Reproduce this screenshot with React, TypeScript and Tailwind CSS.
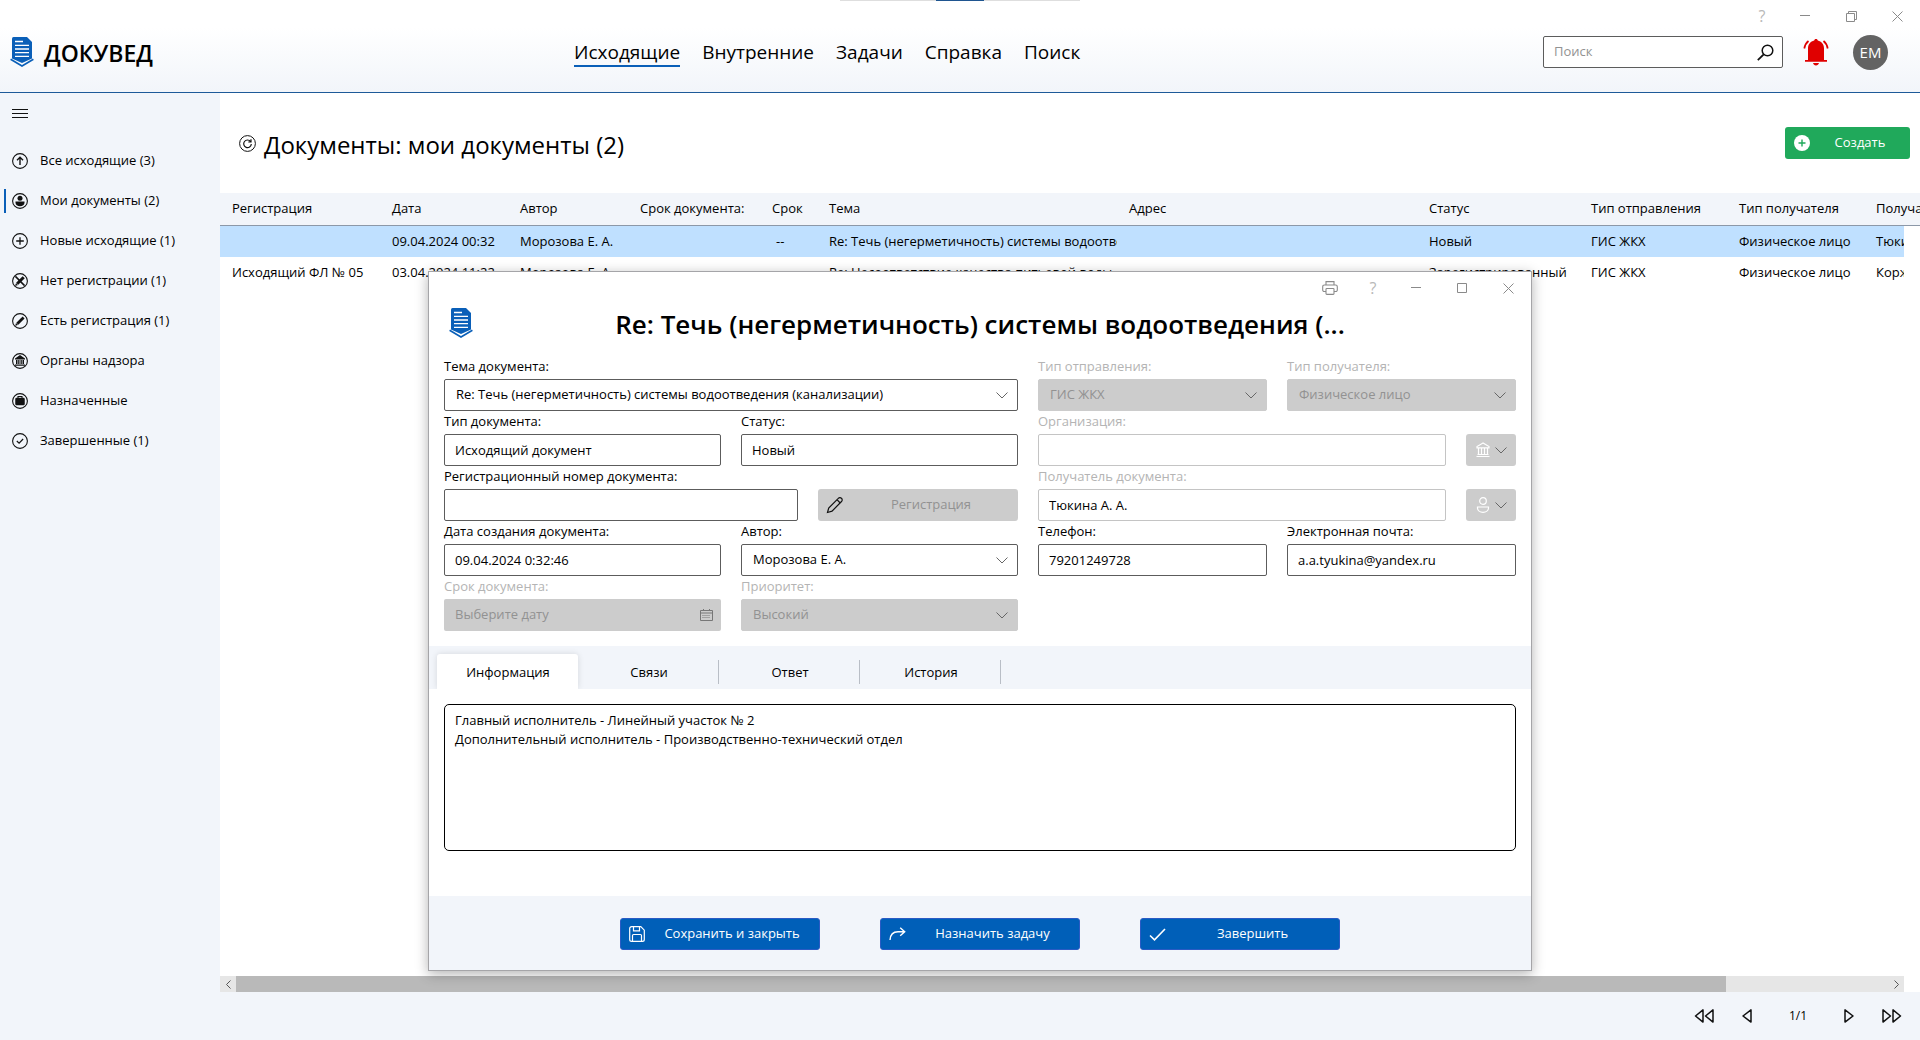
import React, { useState } from 'react';
import clsx from 'clsx';

interface Doc {
  reg: string;
  date: string;
  author: string;
  due: string;
  left: string;
  subject: string;
  address: string;
  status: string;
  sendType: string;
  recipientType: string;
  recipient: string;
}

const docs: Doc[] = [
  {
    reg: '',
    date: '09.04.2024 00:32',
    author: 'Морозова Е. А.',
    due: '',
    left: '--',
    subject: 'Re: Течь (негерметичность) системы водоотведения (канализации)',
    address: '',
    status: 'Новый',
    sendType: 'ГИС ЖКХ',
    recipientType: 'Физическое лицо',
    recipient: 'Тюкина А. А.',
  },
  {
    reg: 'Исходящий ФЛ № 05',
    date: '03.04.2024 11:22',
    author: 'Морозова Е. А.',
    due: '',
    left: '',
    subject: 'Re: Несоответствие качества питьевой воды',
    address: '',
    status: 'Зарегистрированный',
    sendType: 'ГИС ЖКХ',
    recipientType: 'Физическое лицо',
    recipient: 'Коржов И. В.',
  },
];

const columns = [
  { key: 'reg', title: 'Регистрация', width: 'w-[160px]' },
  { key: 'date', title: 'Дата', width: 'w-[128px]' },
  { key: 'author', title: 'Автор', width: 'w-[120px]' },
  { key: 'due', title: 'Срок документа:', width: 'w-[132px]' },
  { key: 'left', title: 'Срок', width: 'w-[57px]' },
  { key: 'subject', title: 'Тема', width: 'w-[300px]' },
  { key: 'address', title: 'Адрес', width: 'w-[300px]' },
  { key: 'status', title: 'Статус', width: 'w-[162px]' },
  { key: 'sendType', title: 'Тип отправления', width: 'w-[148px]' },
  { key: 'recipientType', title: 'Тип получателя', width: 'w-[137px]' },
  { key: 'recipient', title: 'Получатель', width: '' },
] as const;

const navItems = ['Исходящие', 'Внутренние', 'Задачи', 'Справка', 'Поиск'];
const tabs = ['Информация', 'Связи', 'Ответ', 'История'];

function Logo() {
  return (
    <svg width="24" height="30" viewBox="0 0 24 30" aria-hidden="true">
      <path d="M3.500 0H17l5 5v16.500L12 26 2 21.500V1.500A1.500 1.500 0 0 1 3.500 0z" fill="#0a5fb8" />
      <path d="M.6 22.300 12 29l11.400-6.700" fill="none" stroke="#0a5fb8" strokeWidth="1.600" />
      <path d="M5 4.500h8M5 8.300h14M5 12h14M5 15.700h14M5 19.400h14" stroke="#fff" strokeWidth="1.300" />
    </svg>
  );
}

function Ring({ children }: { children: React.ReactNode }) {
  return (
    <svg width="16" height="16" viewBox="0 0 16 16" fill="none" stroke="#111" className="shrink-0" aria-hidden="true">
      <circle cx="8" cy="8" r="7.400" strokeWidth="1.100" />
      {children}
    </svg>
  );
}

const menu = [
  { label: 'Все исходящие (3)', icon: <path d="M8 12V4.500M5 7.300l3-3 3 3" strokeWidth="1.400" /> },
  {
    label: 'Мои документы (2)',
    icon: (
      <g fill="#111" stroke="none">
        <circle cx="8" cy="5.200" r="2.500" />
        <path d="M3.500 8.600h9v1.200c0 2-2 3.400-4.500 3.400s-4.500-1.400-4.500-3.400z" />
      </g>
    ),
  },
  { label: 'Новые исходящие (1)', icon: <path d="M8 4.200v7.600M4.200 8h7.600" strokeWidth="1.300" /> },
  {
    label: 'Нет регистрации (1)',
    icon: (
      <>
        <path d="M11.700 4.300 5.200 10.800" strokeWidth="3" />
        <path d="m3.500 12.500 2-.6-1.400-1.400z" fill="#111" strokeWidth=".5" />
        <path d="m3.400 3.400 9.200 9.200" strokeWidth="1.500" />
      </>
    ),
  },
  {
    label: 'Есть регистрация (1)',
    icon: (
      <>
        <path d="M11.600 4.400 5.300 10.700" strokeWidth="2.800" />
        <path d="m3.600 12.400 2-.6-1.400-1.400z" fill="#111" strokeWidth=".5" />
      </>
    ),
  },
  {
    label: 'Органы надзора',
    icon: (
      <g fill="#111" stroke="none">
        <path d="M8 2 3 5.500v1h10v-1zM3 11.500h10v1.200H3z" />
        <path d="M4 7h1.500v4H4zM6.200 7h1.300v4H6.200zM8.500 7h1.300v4H8.500zM10.500 7H12v4h-1.500z" />
      </g>
    ),
  },
  {
    label: 'Назначенные',
    icon: (
      <>
        <rect x="3.500" y="5" width="9" height="7" rx="1" fill="#111" strokeWidth=".5" />
        <path d="M6 5V3.500h4V5" strokeWidth="1.100" />
      </>
    ),
  },
  { label: 'Завершенные (1)', icon: <path d="m4.800 8 2.300 2.200 4-4.200" strokeWidth="1.200" /> },
];

function Chevron({ className }: { className?: string }) {
  return (
    <svg width="12" height="7" viewBox="0 0 12 7" fill="none" stroke="#666" className={className} aria-hidden="true">
      <path d="m.5.5 5.500 5.500L11.500.5" />
    </svg>
  );
}

function BankIcon() {
  return (
    <svg width="16" height="16" viewBox="0 0 16 16" fill="none" stroke="#fff" aria-hidden="true">
      <path d="M8 1 2 4.500v1.300h12V4.500zM2.500 12.500h11M1.500 14.500h13" strokeWidth="1.200" />
      <path d="M3.500 6v6M6.500 6v6M9.500 6v6M12.500 6v6" strokeWidth="1.200" />
    </svg>
  );
}

function PersonIcon() {
  return (
    <svg width="16" height="16" viewBox="0 0 16 16" fill="none" stroke="#fff" strokeWidth="1.200" aria-hidden="true">
      <circle cx="8" cy="4" r="3.300" />
      <path d="M2.500 10h11v1c0 2.500-2.500 4.300-5.500 4.300S2.500 13.500 2.500 11z" />
    </svg>
  );
}

interface FieldProps {
  id: string;
  label: string;
  value?: string;
  muted?: boolean;
  disabled?: boolean;
  className?: string;
}

function FieldLabel({ id, label, muted }: { id: string; label: string; muted?: boolean }) {
  return (
    <label htmlFor={id} className={clsx('h-[23px] leading-5 whitespace-nowrap', muted && 'text-[#b4b4b4]')}>
      {label}
    </label>
  );
}

function TextField({ id, label, value = '', muted, className }: FieldProps) {
  return (
    <div className={clsx('flex flex-col min-w-0', className)}>
      <FieldLabel id={id} label={label} muted={muted} />
      <input
        id={id}
        defaultValue={value}
        className={clsx('h-8 w-full rounded-xs border bg-white px-2.5', muted ? 'border-[#c4c4c4]' : 'border-[#5c5c5c]')}
      />
    </div>
  );
}

function SelectField({ id, label, value = '', disabled, className }: FieldProps) {
  return (
    <div className={clsx('flex flex-col min-w-0', className)}>
      <FieldLabel id={id} label={label} muted={disabled} />
      <div className="grid items-center">
        <select
          id={id}
          disabled={disabled}
          className={clsx(
            'col-start-1 row-start-1 h-8 w-full appearance-none rounded-xs border px-[11px] opacity-100',
            disabled ? 'border-[#ccc] bg-[#ccc] text-[#929292]' : 'border-[#5c5c5c] bg-white'
          )}
        >
          <option>{value}</option>
        </select>
        <Chevron className="pointer-events-none col-start-1 row-start-1 mr-2.5 justify-self-end" />
      </div>
    </div>
  );
}

function WindowButton({ label, children }: { label: string; children: React.ReactNode }) {
  return (
    <button type="button" aria-label={label} className="flex h-8 w-[46px] items-center justify-center text-[#8a8a8a]">
      {children}
    </button>
  );
}

function HelpButton() {
  return (
    <button type="button" aria-label="Справка" className="h-8 w-10 text-base text-[#b8b8b8]">
      ?
    </button>
  );
}

function CloseIcon() {
  return (
    <svg width="11" height="11" viewBox="0 0 11 11" stroke="currentColor" aria-hidden="true">
      <path d="m.5.5 10 10M10.500.5l-10 10" />
    </svg>
  );
}

function MinimizeIcon() {
  return (
    <svg width="10" height="11" viewBox="0 0 10 11" stroke="currentColor" aria-hidden="true">
      <path d="M0 4.500h10" />
    </svg>
  );
}

function Header() {
  return (
    <header className="relative border-b border-[#1d5a99] bg-linear-to-b from-white from-30% to-[#f2f5fa]">
      <div className="absolute top-0 left-1/2 flex h-px w-60 -translate-x-1/2 justify-center bg-[#dedede]">
        <span className="w-12 bg-[#1f5590]" />
      </div>
      <div className="flex h-8 justify-end">
        <HelpButton />
        <WindowButton label="Свернуть"><MinimizeIcon /></WindowButton>
        <WindowButton label="Восстановить">
          <svg width="11" height="11" viewBox="0 0 11 11" fill="none" stroke="currentColor" aria-hidden="true">
            <path d="M.5 2.500h8v8h-8zM2.500 2.500v-2h8v8h-2" />
          </svg>
        </WindowButton>
        <WindowButton label="Закрыть"><CloseIcon /></WindowButton>
      </div>
      <div className="mb-5 flex h-10 items-center">
        <div className="flex w-[574px] shrink-0 items-center gap-2.5 pl-2.5">
          <Logo />
          <span className="pt-0.5 text-[23px] font-semibold">ДОКУВЕД</span>
        </div>
        <nav className="flex gap-[22px] pt-0.5 text-[19px] leading-[26px]">
          {navItems.map((item, i) => (
            <a key={item} href="#" className={clsx('border-b-2', i === 0 ? 'border-[#0a5fb8]' : 'border-transparent')}>
              {item}
            </a>
          ))}
        </nav>
        <div className="ml-auto flex items-center pr-8">
          <div className="flex h-8 w-60 items-center rounded-xs border border-[#5c5c5c] bg-white pr-2 pl-2.5">
            <input aria-label="Поиск" placeholder="Поиск" className="min-w-0 flex-1 outline-none placeholder:text-[#929292]" />
            <svg width="17" height="17" viewBox="0 0 17 17" fill="none" stroke="#111" aria-hidden="true">
              <circle cx="10.500" cy="6.500" r="5.300" strokeWidth="1.500" />
              <path d="M6.700 10.300.8 16.200" strokeWidth="1.800" />
            </svg>
          </div>
          <button type="button" aria-label="Уведомления" className="ml-5">
            <svg width="26" height="28" viewBox="0 0 26 28" fill="#e00000" aria-hidden="true">
              <path d="M13 1c1 0 1.700.7 1.800 1.600 3.600.9 6.200 3.800 6.200 7.900V22h3v1.800H2V22h3V10.500c0-4.100 2.600-7 6.200-7.900C11.300 1.700 12 1 13 1zM10 25h6c-.4 1.600-1.500 2.500-3 2.500S10.400 26.600 10 25z" />
              <path d="M5.500 3C3.200 4.800 1.800 7.200 1.300 10.500M20.500 3c2.300 1.800 3.700 4.200 4.200 7.500" fill="none" stroke="#e00000" strokeWidth="1.700" />
            </svg>
          </button>
          <button type="button" className="ml-6 size-[35px] rounded-full bg-[#636363] text-[15px] text-white">ЕМ</button>
        </div>
      </div>
    </header>
  );
}

function Sidebar() {
  return (
    <aside className="w-[220px] shrink-0 bg-[#f2f5fa]">
      <button type="button" aria-label="Меню" className="mt-4 ml-3 block">
        <svg width="16" height="10" viewBox="0 0 16 10" stroke="#111" aria-hidden="true">
          <path d="M0 .5h16M0 4.500h16M0 8.500h16" />
        </svg>
      </button>
      <ul className="mt-[22px]">
        {menu.map((item, i) => (
          <li key={item.label} className="flex h-10 items-center pl-1">
            <span className={clsx('h-6 w-0.5', i === 1 && 'bg-[#0a5fb8]')} />
            <a href="#" className="ml-1.5 flex items-center gap-3">
              <Ring>{item.icon}</Ring>
              {item.label}
            </a>
          </li>
        ))}
      </ul>
    </aside>
  );
}

function DocTable() {
  return (
    <table className="w-full table-fixed border-collapse text-left">
      <thead>
        <tr className="h-8 border-b border-[#8c98a8] bg-[#f2f5fa]">
          {columns.map((col) => (
            <th key={col.key} className={clsx('pl-3 font-normal whitespace-nowrap', col.width)}>{col.title}</th>
          ))}
          <td className="w-4" />
        </tr>
      </thead>
      <tbody>
        {docs.map((doc, i) => (
          <tr key={doc.date} className="h-8">
            {columns.map((col) => (
              <td
                key={col.key}
                className={clsx(
                  'overflow-hidden whitespace-nowrap',
                  col.key === 'left' ? 'pl-4' : 'pl-3',
                  i === 0 && 'bg-[#bfe0ff]'
                )}
              >
                {doc[col.key]}
              </td>
            ))}
            <td />
          </tr>
        ))}
      </tbody>
    </table>
  );
}

function ActionButton({ label, children }: { label: string; children: React.ReactNode }) {
  return (
    <button type="button" className="flex h-8 w-[200px] items-center rounded-[3px] border border-[#2a5bc4] bg-[#005fb8] pl-2 text-white">
      {children}
      <span className="flex-1">{label}</span>
    </button>
  );
}

function DocumentDialog() {
  const [tab, setTab] = useState(0);

  return (
    <section
      role="dialog"
      aria-labelledby="dialog-title"
      className="absolute top-[271px] left-[428px] w-[1104px] border border-[#a5a5a8] bg-white shadow-[0_3px_12px_rgba(0,0,0,0.3)]"
    >
      <div className="flex h-8 justify-end">
        <WindowButton label="Печать">
          <svg width="16" height="14" viewBox="0 0 16 14" fill="none" stroke="currentColor" strokeWidth="1.100" aria-hidden="true">
            <path d="M4 4V.6h8V4M4 10.500H2.200A1.500 1.500 0 0 1 .7 9V5.700C.7 4.700 1.400 4 2.400 4h11.200c1 0 1.700.7 1.700 1.700V9a1.500 1.500 0 0 1-1.500 1.500H12" />
            <rect x="4" y="7.500" width="8" height="5.900" rx=".8" />
          </svg>
        </WindowButton>
        <HelpButton />
        <WindowButton label="Свернуть"><MinimizeIcon /></WindowButton>
        <WindowButton label="Развернуть">
          <svg width="10" height="10" viewBox="0 0 10 10" fill="none" stroke="currentColor" aria-hidden="true">
            <path d="M.5.5h9v9h-9z" />
          </svg>
        </WindowButton>
        <WindowButton label="Закрыть"><CloseIcon /></WindowButton>
      </div>

      <div className="flex h-[52px] items-start px-5">
        <div className="w-6 pt-1"><Logo /></div>
        <h2 id="dialog-title" className="flex-1 pr-6 text-center text-[26px] leading-10 font-semibold">
          Re: Течь (негерметичность) системы водоотведения (...
        </h2>
      </div>

      <form className="grid grid-cols-[574fr_478fr] gap-x-5 px-[15px] pb-[15px]">
        <div className="flex flex-col">
          <SelectField id="subject" label="Тема документа:" value="Re: Течь (негерметичность) системы водоотведения (канализации)" />
          <div className="grid grid-cols-2 gap-x-5">
            <TextField id="doc-type" label="Тип документа:" value="Исходящий документ" />
            <TextField id="status" label="Статус:" value="Новый" />
          </div>
          <div className="flex items-end gap-5">
            <TextField id="reg-number" label="Регистрационный номер документа:" className="flex-1" />
            <button type="button" disabled className="flex h-8 w-[200px] items-center rounded-[3px] bg-[#ccc] pl-2 text-[#929292]">
              <svg width="18" height="18" viewBox="0 0 18 18" fill="none" stroke="#111" strokeWidth="1.200" aria-hidden="true">
                <path d="M1.500 16.500 2.700 12 12.300 2.300a2.200 2.200 0 0 1 3.200 0 2.200 2.200 0 0 1 0 3.200L6 15.200zM11 3.700 14.200 7" />
              </svg>
              <span className="flex-1">Регистрация</span>
            </button>
          </div>
          <div className="grid grid-cols-2 gap-x-5">
            <TextField id="created" label="Дата создания документа:" value="09.04.2024 0:32:46" />
            <SelectField id="author" label="Автор:" value="Морозова Е. А." />
            <div className="flex flex-col">
              <FieldLabel id="due" label="Срок документа:" muted />
              <div className="flex h-8 items-center rounded-xs bg-[#ccc] pr-2 pl-[11px]">
                <input id="due" disabled placeholder="Выберите дату" className="min-w-0 flex-1 placeholder:text-[#929292]" />
                <svg width="13" height="12" viewBox="0 0 13 12" fill="none" stroke="#777" aria-hidden="true">
                  <path d="M.5 1.500h12v10H.5zM.5 4h12M3.500 0v2M9.500 0v2" />
                  <path d="M2.500 6.500h8M2.500 8.500h8" strokeDasharray="1 1" />
                </svg>
              </div>
            </div>
            <SelectField id="priority" label="Приоритет:" value="Высокий" disabled />
          </div>
        </div>

        <div className="flex flex-col">
          <div className="grid grid-cols-2 gap-x-5">
            <SelectField id="send-type" label="Тип отправления:" value="ГИС ЖКХ" disabled />
            <SelectField id="recipient-type" label="Тип получателя:" value="Физическое лицо" disabled />
          </div>
          <div className="flex items-end gap-5">
            <TextField id="organization" label="Организация:" muted className="flex-1" />
            <button type="button" disabled aria-label="Выбрать организацию" className="flex h-8 w-[50px] items-center justify-center gap-1 rounded-[3px] bg-[#ccc]">
              <BankIcon />
              <Chevron />
            </button>
          </div>
          <div className="flex items-end gap-5">
            <TextField id="recipient" label="Получатель документа:" value="Тюкина А. А." muted className="flex-1" />
            <button type="button" disabled aria-label="Выбрать получателя" className="flex h-8 w-[50px] items-center justify-center gap-1 rounded-[3px] bg-[#ccc]">
              <PersonIcon />
              <Chevron />
            </button>
          </div>
          <div className="grid grid-cols-2 gap-x-5">
            <TextField id="phone" label="Телефон:" value="79201249728" />
            <TextField id="email" label="Электронная почта:" value="a.a.tyukina@yandex.ru" />
          </div>
        </div>
      </form>

      <div role="tablist" className="flex h-[43px] items-end overflow-hidden bg-[#f2f5fa] pl-2">
        {tabs.map((name, i) => (
          <button
            key={name}
            type="button"
            role="tab"
            aria-selected={tab === i}
            onClick={() => setTab(i)}
            className={clsx(
              'flex h-[35px] w-[141px] items-center',
              tab === i && 'rounded-t-[3px] bg-white shadow-[0_0_6px_rgba(0,0,0,0.12)]'
            )}
          >
            <span className={clsx('flex-1 border-r pl-0.5 leading-6', tab === i ? 'border-transparent' : 'border-[#b9bec6]')}>
              {name}
            </span>
          </button>
        ))}
      </div>

      <div className="px-[15px] pt-[15px] pb-[45px]">
        <textarea
          aria-label="Информация"
          className="block h-[147px] w-full resize-none rounded-[5px] border border-black px-2.5 py-1.5 leading-[19px]"
          defaultValue={'Главный исполнитель - Линейный участок № 2\nДополнительный исполнитель - Производственно-технический отдел'}
        />
      </div>

      <footer className="flex justify-center gap-[60px] bg-[#f2f5fa] pt-[22px] pb-5">
        <ActionButton label="Сохранить и закрыть">
          <svg width="16" height="16" viewBox="0 0 16 16" fill="none" stroke="#fff" strokeWidth="1.200" aria-hidden="true">
            <path d="M2.600.7h9.200l3.500 3.500v9.200a1.900 1.900 0 0 1-1.900 1.900H2.600a1.900 1.900 0 0 1-1.900-1.900V2.600C.7 1.500 1.500.7 2.600.7z" />
            <path d="M4.500.7v4.100h6V.7M3.500 15.300V9.500c0-.6.400-1 1-1h7c.6 0 1 .4 1 1v5.800" />
          </svg>
        </ActionButton>
        <ActionButton label="Назначить задачу">
          <svg width="17" height="14" viewBox="0 0 17 14" fill="none" stroke="#fff" strokeWidth="1.400" aria-hidden="true">
            <path d="M1 13c.3-5.500 3.500-8.300 8-8.300h6.500M11.200.8l4.500 3.900-4.500 4" />
          </svg>
        </ActionButton>
        <ActionButton label="Завершить">
          <svg width="17" height="13" viewBox="0 0 17 13" fill="none" stroke="#fff" strokeWidth="1.600" aria-hidden="true">
            <path d="m1 7.500 4.500 4.300L16 1" />
          </svg>
        </ActionButton>
      </footer>
    </section>
  );
}

function Pager() {
  return (
    <footer className="flex h-12 items-center justify-end bg-[#f2f5fa] pr-[18px]">
      <button type="button" aria-label="Первая страница">
        <svg width="20" height="14" viewBox="0 0 20 14" fill="none" stroke="#111" strokeWidth="1.500" strokeLinejoin="round" aria-hidden="true">
          <path d="M9 .9v12.200L1.500 7zM19 .9v12.200L11.500 7z" />
        </svg>
      </button>
      <button type="button" aria-label="Предыдущая страница" className="ml-7">
        <svg width="10" height="14" viewBox="0 0 10 14" fill="none" stroke="#111" strokeWidth="1.500" strokeLinejoin="round" aria-hidden="true">
          <path d="M9 .9v12.200L1 7z" />
        </svg>
      </button>
      <span className="w-[92px] text-center text-xs">1/1</span>
      <button type="button" aria-label="Следующая страница">
        <svg width="10" height="14" viewBox="0 0 10 14" fill="none" stroke="#111" strokeWidth="1.500" strokeLinejoin="round" aria-hidden="true">
          <path d="M1 .9v12.200L9 7z" />
        </svg>
      </button>
      <button type="button" aria-label="Последняя страница" className="ml-7">
        <svg width="20" height="14" viewBox="0 0 20 14" fill="none" stroke="#111" strokeWidth="1.500" strokeLinejoin="round" aria-hidden="true">
          <path d="M1 .9v12.200L8.500 7zM11 .9v12.200L18.500 7z" />
        </svg>
      </button>
    </footer>
  );
}

export default function App() {
  return (
    <div className="relative flex min-h-screen flex-col overflow-hidden bg-white font-['Open_Sans','Noto_Sans',sans-serif] text-[13px] text-black">
      <Header />
      <div className="flex flex-1">
        <Sidebar />
        <main className="flex min-w-0 flex-1 flex-col overflow-hidden">
          <div className="flex h-[100px] items-center gap-2 pr-2.5 pl-[19px]">
            <button type="button" aria-label="Обновить">
              <svg width="17" height="17" viewBox="0 0 17 17" fill="none" stroke="#111" aria-hidden="true">
                <circle cx="8.500" cy="8.500" r="7.900" />
                <path d="M11.600 6.600A3.800 3.800 0 1 0 12.300 9M12 4.200v2.800H9.300" strokeWidth="1.200" />
              </svg>
            </button>
            <h1 className="pt-1 text-2xl">Документы: мои документы (2)</h1>
            <button type="button" className="ml-auto flex h-8 w-[125px] items-center rounded-[3px] bg-[#20a95b] pl-[9px] text-white">
              <svg width="16" height="16" viewBox="0 0 16 16" aria-hidden="true">
                <circle cx="8" cy="8" r="8" fill="#fff" />
                <path d="M8 4.500v7M4.500 8h7" stroke="#20a95b" strokeWidth="1.400" />
              </svg>
              <span className="flex-1">Создать</span>
            </button>
          </div>
          <DocTable />
          <div className="mt-auto mr-4 flex h-4 bg-[#e6e6e6]">
            <button type="button" aria-label="Прокрутить влево" className="flex w-4 items-center justify-center">
              <svg width="5" height="9" viewBox="0 0 5 9" fill="none" stroke="#555"><path d="m4.500.5-4 4 4 4" /></svg>
            </button>
            <div className="grid flex-1 grid-cols-[1490fr_162fr]">
              <span className="bg-[#b9b9b9]" />
            </div>
            <button type="button" aria-label="Прокрутить вправо" className="flex w-4 items-center justify-center">
              <svg width="5" height="9" viewBox="0 0 5 9" fill="none" stroke="#555"><path d="m.5.5 4 4-4 4" /></svg>
            </button>
          </div>
        </main>
      </div>
      <Pager />
      <DocumentDialog />
    </div>
  );
}
